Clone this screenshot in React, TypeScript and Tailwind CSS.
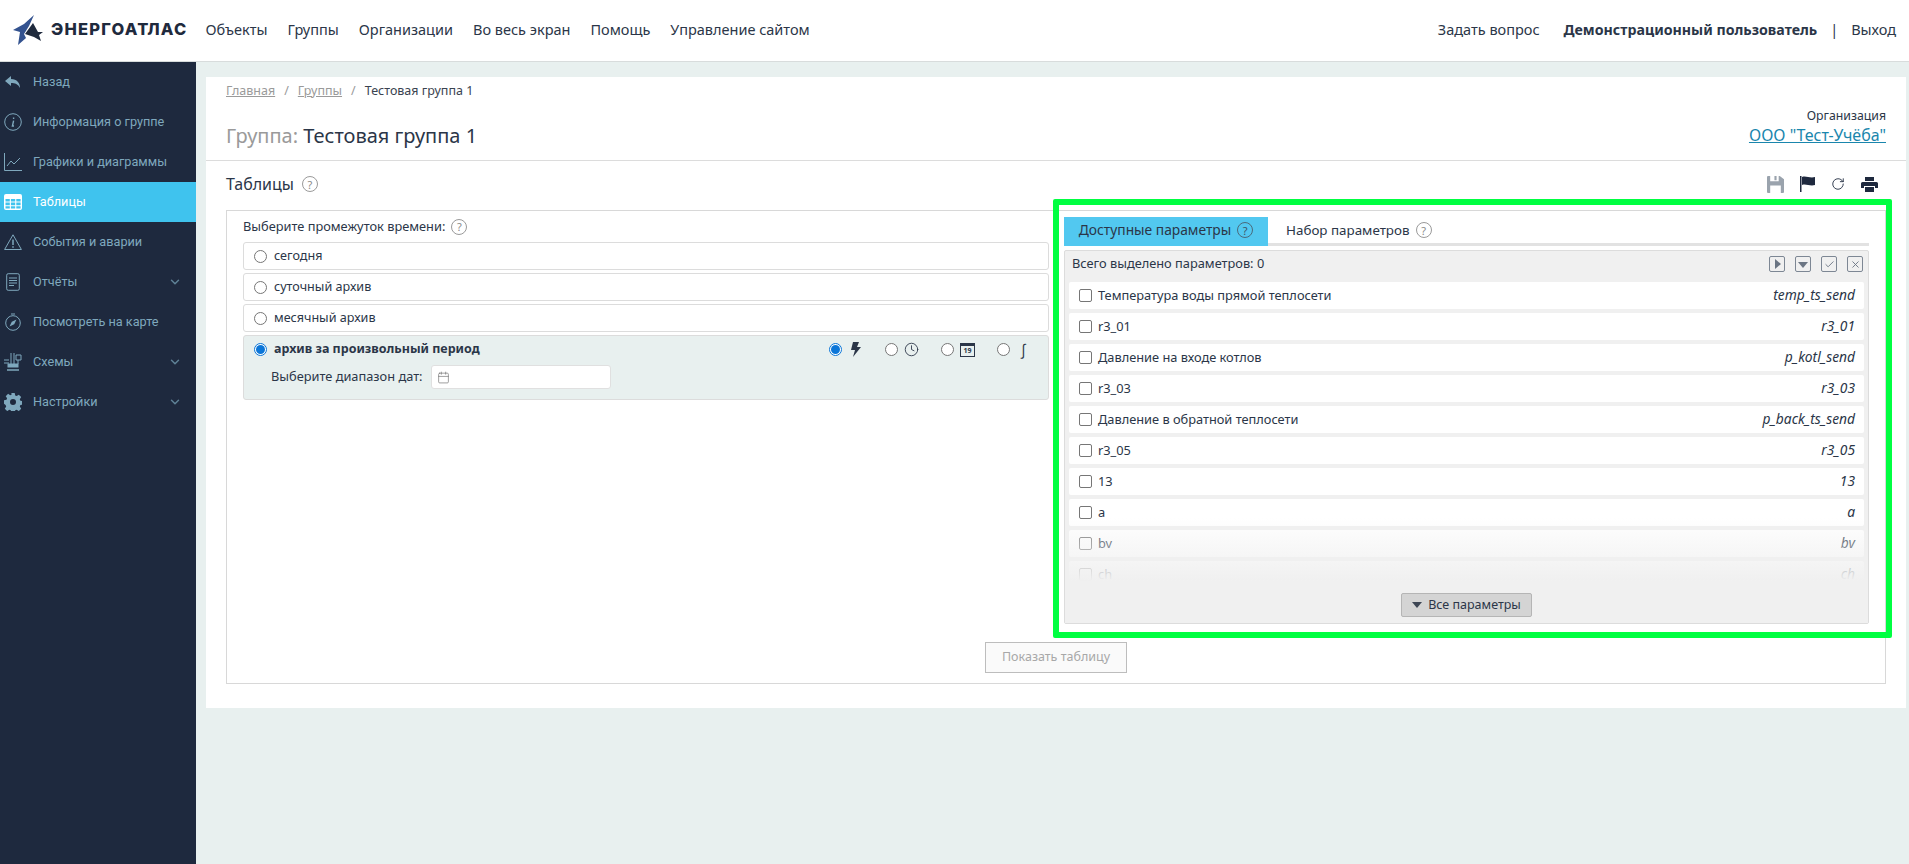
import { ChevronDown, Check, X, Calendar, Clock, RotateCw } from "lucide-react"

const font = "font-['Noto_Sans','Open_Sans',sans-serif]"

const topLinks = ["Объекты", "Группы", "Организации", "Во весь экран", "Помощь", "Управление сайтом"]

const params = [
  { name: "Температура воды прямой теплосети", code: "temp_ts_send" },
  { name: "r3_01", code: "r3_01" },
  { name: "Давление на входе котлов", code: "p_kotl_send" },
  { name: "r3_03", code: "r3_03" },
  { name: "Давление в обратной теплосети", code: "p_back_ts_send" },
  { name: "r3_05", code: "r3_05" },
  { name: "13", code: "13" },
  { name: "a", code: "a" },
  { name: "bv", code: "bv" },
  { name: "ch", code: "ch" },
]

function Logo() {
  return (
    <svg width="34" height="32" viewBox="0 0 34 32" className="shrink-0">
      <path d="M23 1 L13 10 L2 16 L9 18 L7 31 L15 24 L13 20 L18 12 Z" fill="#33528f" />
      <path d="M22 9 L27 18 L32 18 L28 21 L30 27 L23 23 L14 20 Z" fill="#1f2a3d" />
    </svg>
  )
}

function Help({ dark }: { dark?: boolean }) {
  return (
    <span
      className={`inline-flex h-4 w-4 items-center justify-center rounded-full border text-[11px] leading-none ${
        dark ? "border-[#4a6a7c] text-[#3d5566]" : "border-[#9a9a9a] text-[#8a8a8a]"
      }`}
    >
      ?
    </span>
  )
}

function Radio({ on = false }: { on?: boolean }) {
  if (on) {
    return (
      <span className="flex h-[13px] w-[13px] shrink-0 items-center justify-center rounded-full border border-[#0b76d8] bg-white">
        <span className="h-[9px] w-[9px] rounded-full bg-[#0b76d8]" />
      </span>
    )
  }
  return <span className="h-[13px] w-[13px] shrink-0 rounded-full border border-[#767676] bg-white" />
}

function SideItem({ icon, label, active, sub }: { icon: React.ReactNode; label: string; active?: boolean; sub?: boolean }) {
  return (
    <div className={`flex h-10 items-center pl-1 pr-[14px] font-['Roboto',sans-serif] text-[12.7px] ${active ? "bg-[#3fc3ee] text-white" : "text-[#7fa8bd]"}`}>
      <span className="flex w-[18px] justify-center">{icon}</span>
      <span className="ml-[11px] flex-1 whitespace-nowrap">{label}</span>
      {sub && <ChevronDown size={14} strokeWidth={2.5} className="text-[#5f8296]" />}
    </div>
  )
}

function Sidebar() {
  const c = "#7fa8bd"
  return (
    <aside className="w-[196px] shrink-0 bg-[#1e293e]">
      <SideItem
        label="Назад"
        icon={
          <svg width="16" height="12" viewBox="0 0 16 12" fill={c}>
            <path d="M6 0 L0 5 L6 10 V7 C10 7 13 8 15 12 C15 7 12 3 6 3 Z" />
          </svg>
        }
      />
      <SideItem
        label="Информация о группе"
        icon={
          <svg width="18" height="18" viewBox="0 0 18 18" fill="none" stroke={c}>
            <circle cx="9" cy="9" r="8.3" />
            <path d="M9.6 4.5v1.4M9.6 7.6 L8.4 13 H10" strokeWidth="1.4" />
          </svg>
        }
      />
      <SideItem
        label="Графики и диаграммы"
        icon={
          <svg width="18" height="18" viewBox="0 0 18 18" fill="none" stroke={c}>
            <path d="M.5 0v17.5H18M3 13l4-5 3 3 6-6" />
          </svg>
        }
      />
      <SideItem
        active
        label="Таблицы"
        icon={
          <svg width="18" height="16" viewBox="0 0 18 16" fill="#fff">
            <path d="M2 0h14a2 2 0 0 1 2 2v12a2 2 0 0 1-2 2H2a2 2 0 0 1-2-2V2a2 2 0 0 1 2-2Z" />
            <path
              fill="#3fc3ee"
              d="M1.5 5h4.3v2.6H1.5zM6.9 5h4.300v2.600H6.900zM12.300 5h4.300v2.600h-4.300zM1.500 8.600h4.300v2.600H1.500zM6.900 8.600h4.300v2.600H6.900zM12.300 8.600h4.300v2.600h-4.300zM1.500 12.200h4.300v2.300H1.500zM6.900 12.200h4.300v2.300H6.900zM12.300 12.200h4.300v2.300h-4.300z"
            />
          </svg>
        }
      />
      <SideItem
        label="События и аварии"
        icon={
          <svg width="18" height="16" viewBox="0 0 18 16" fill="none" stroke={c}>
            <path d="M9 .8 L17.4 15.500 H.6 Z" strokeLinejoin="round" />
            <path d="M9 5.500v5.500M9 12.200v1.500" strokeWidth="1.500" />
          </svg>
        }
      />
      <SideItem
        sub
        label="Отчёты"
        icon={
          <svg width="14" height="18" viewBox="0 0 14 18" fill="none" stroke={c}>
            <rect x=".7" y=".7" width="12.600" height="16.600" rx="1.500" />
            <path d="M3 5h8M3 7.500h8M3 10h8M3 12.500h5" />
          </svg>
        }
      />
      <SideItem
        label="Посмотреть на карте"
        icon={
          <svg width="18" height="18" viewBox="0 0 18 18" fill="none" stroke={c}>
            <circle cx="9" cy="10" r="7.300" />
            <path d="M7 1h4" />
            <path d="M12.500 6.500 L10.200 11.200 L5.500 13.500 L7.800 8.800 Z" fill={c} stroke="none" />
          </svg>
        }
      />
      <SideItem
        sub
        label="Схемы"
        icon={
          <svg width="18" height="18" viewBox="0 0 18 18" fill="none" stroke={c}>
            <path d="M0 7h5M0 10h5M7 0v11M10 0v11M12 2h5v5h-5zM14 7v4" />
            <rect x="4" y="11" width="10" height="3" fill={c} />
            <path d="M3 17h12" strokeWidth="1.500" />
          </svg>
        }
      />
      <SideItem
        sub
        label="Настройки"
        icon={
          <svg width="18" height="18" viewBox="0 0 18 18" fill={c}>
            <path
              fillRule="evenodd"
              d="M7.300 0h3.400l.5 2.500 1.500.6 2.100-1.400 2.400 2.400-1.400 2.100.6 1.500 2.500.5v3.400l-2.500.5-.6 1.500 1.400 2.100-2.400 2.400-2.100-1.400-1.500.6-.5 2.500H7.300l-.5-2.500-1.500-.6-2.100 1.400-2.400-2.400 1.400-2.100-.6-1.500L0 10.700V7.300l2.500-.5.600-1.500-1.400-2.100 2.400-2.400 2.100 1.400 1.500-.6zM9 6a3 3 0 1 0 0 6 3 3 0 0 0 0-6Z"
            />
          </svg>
        }
      />
    </aside>
  )
}

function TimeRow({ label }: { label: string }) {
  return (
    <div className="flex h-[28px] items-center gap-[7px] rounded-[3px] border border-[#dcdcdc] pl-[10px] text-[12.6px] text-[#2b3648]">
      <Radio />
      {label}
    </div>
  )
}

function ToolBtn({ children }: { children: React.ReactNode }) {
  return (
    <span className="flex h-4 w-4 items-center justify-center rounded-[2px] border border-[#7d8794] text-[#6b7583]">{children}</span>
  )
}

function ParamRow({ name, code }: { name: string; code: string }) {
  return (
    <div className="flex h-[27px] shrink-0 items-center rounded-[2px] bg-white pl-[10px] pr-[9px] text-[12.8px] text-[#2b3648]">
      <span className="h-[13px] w-[13px] rounded-[2px] border border-[#767676]" />
      <span className="ml-[6px] flex-1">{name}</span>
      <span className="text-[13.8px] italic">{code}</span>
    </div>
  )
}

export default function App() {
  return (
    <div className={`flex h-[864px] flex-col overflow-hidden bg-[#e8f0ef] ${font}`}>
      <header className="flex h-[62px] shrink-0 items-center border-b border-[#d8dcdc] bg-white pb-[2px] pl-[11px] pr-[13px] text-[14.5px] text-[#2b3648]">
        <Logo />
        <span className="ml-[6px] font-['Inter',sans-serif] text-[16.5px] font-extrabold tracking-[1.2px] text-[#1f2a3d]">ЭНЕРГОАТЛАС</span>
        <nav className="ml-[18px] flex gap-5">
          {topLinks.map((t) => (
            <span key={t}>{t}</span>
          ))}
        </nav>
        <div className="ml-auto flex items-center">
          <span>Задать вопрос</span>
          <span className="ml-6 text-[14.2px] font-bold">Демонстрационный пользователь</span>
          <span className="mx-[13px]">|</span>
          <span>Выход</span>
        </div>
      </header>
      <div className="flex min-h-0 flex-1">
        <Sidebar />
        <main className="min-w-0 flex-1 pl-[10px] pr-[3px] pt-[15px]">
          <div className="bg-white pb-6">
            <div className="h-[84px] border-b border-[#dcdcdc] px-5">
              <div className="flex items-start justify-between">
                <div>
                  <div className="flex gap-[9px] pt-[5px] text-[12.5px] text-[#9a9a9a]">
                    <span className="underline">Главная</span>
                    <span>/</span>
                    <span className="underline">Группы</span>
                    <span>/</span>
                    <span className="text-[#3a4350]">Тестовая группа 1</span>
                  </div>
                  <div className="mt-[20px] text-[20px] text-[#2b3648]">
                    <span className="text-[#9a9a9a]">Группа:</span> Тестовая группа 1
                  </div>
                </div>
                <div className="pt-[31px] text-right">
                  <div className="text-[12.3px] leading-4 text-[#2b3648]">Организация</div>
                  <div className="mt-[1px] text-[16px] leading-5 text-[#1a86ad] underline">ООО "Тест-Учёба"</div>
                </div>
              </div>
            </div>
            <div className="flex h-[49px] items-center justify-between px-5 pb-[3px]">
              <div className="flex items-center gap-2 text-[16px] text-[#2b3648]">
                Таблицы <Help />
              </div>
              <div className="flex items-center gap-[16px] pr-2 text-[#1e293e]">
                <svg width="17" height="17" viewBox="0 0 16 16" fill="#9aa3ad">
                  <path
                    fillRule="evenodd"
                    d="M1 0h11l4 3v12a1 1 0 0 1-1 1H1a1 1 0 0 1-1-1V1a1 1 0 0 1 1-1Zm2 0v5h8V0H9v4H7V0ZM3 9v7h10V9Z"
                  />
                </svg>
                <svg width="15" height="16" viewBox="0 0 15 16" fill="currentColor">
                  <path d="M0 0h1.500v16H0zM2 1c4-1.500 8 1.500 13 0v8c-5 1.500-9-1.500-13 0Z" />
                </svg>
                <RotateCw size={14} strokeWidth={1.5} />
                <svg width="17" height="15" viewBox="0 0 17 15" fill="currentColor">
                  <path
                    fillRule="evenodd"
                    d="M4 0h9v4H4ZM1.500 5h14A1.500 1.500 0 0 1 17 6.500V11h-3V9H3v2H0V6.500A1.500 1.500 0 0 1 1.500 5ZM4 10h9v5H4Z"
                  />
                </svg>
              </div>
            </div>
            <div className="mx-5 flex h-[474px] flex-col border border-[#d8d8d8]">
              <div className="flex h-[431px] shrink-0">
                <div className="w-[826px] shrink-0 pl-4 pr-1">
                  <div className="flex h-[31px] items-center gap-[6px] text-[12.8px] text-[#2b3648]">
                    Выберите промежуток времени: <Help />
                  </div>
                  <div className="flex flex-col gap-[3px]">
                    <TimeRow label="сегодня" />
                    <TimeRow label="суточный архив" />
                    <TimeRow label="месячный архив" />
                    <div className="h-[65px] rounded-[3px] border border-[#dcdcdc] bg-[#e8f0ef] pl-[10px] text-[12.5px] text-[#2b3648]">
                      <div className="flex h-[27px] items-center gap-[7px]">
                        <Radio on />
                        <span className="font-bold">архив за произвольный период</span>
                        <div className="ml-auto flex items-center gap-[22px] pr-[17px]">
                          <span className="flex items-center gap-[6px]">
                            <Radio on />
                            <svg width="15" height="15" viewBox="0 0 15 15" fill="currentColor">
                              <path d="M5 0h6L9 5h4L5 15l2-7H3Z" />
                            </svg>
                          </span>
                          <span className="flex items-center gap-[6px]">
                            <Radio />
                            <Clock size={15} strokeWidth={1.4} />
                          </span>
                          <span className="flex items-center gap-[6px]">
                            <Radio />
                            <span className="flex h-[14px] w-[15px] items-center justify-center border border-t-[3px] border-[#2b3648] pb-[1px] text-[7px] font-bold leading-none">
                              19
                            </span>
                          </span>
                          <span className="flex items-center gap-[6px]">
                            <Radio />
                            <span className="w-[15px] text-center text-[15px] leading-none">∫</span>
                          </span>
                        </div>
                      </div>
                      <div className="flex items-center gap-2 pl-[17px] pt-[2px] text-[12.8px]">
                        Выберите диапазон дат:
                        <span className="flex h-6 w-[180px] items-center rounded-[3px] border border-[#e0e0e0] bg-white pl-[5px] text-[#777]">
                          <Calendar size={13} strokeWidth={1.3} />
                        </span>
                      </div>
                    </div>
                  </div>
                </div>
                <div className="relative min-w-0 flex-1 pl-[11px] pr-4">
                  <div className="pointer-events-none absolute -right-[7px] -top-[12px] bottom-[4px] left-0 rounded-[2px] border-[6px] border-[#00ff41]" />
                  <div className="mt-[6px] flex h-[29px] border-b-[3px] border-[#e2e2e2] text-[13.8px] text-[#2b3648]">
                    <div className="flex h-[29px] w-[204px] items-center justify-center gap-[6px] border-b-[3px] border-[#52c8f0] bg-[#52c8f0]">
                      Доступные параметры <Help dark />
                    </div>
                    <div className="flex items-center gap-[6px] pl-[18px] text-[13.4px]">
                      Набор параметров <Help />
                    </div>
                  </div>
                  <div className="relative mt-[4px] h-[374px] rounded-[2px] border border-[#dcdcdc] bg-[#f0f0f0] px-[4px]">
                    <div className="flex h-[31px] items-center justify-between pb-[5px] pl-[3px] pr-[1px] text-[12.8px] text-[#2b3648]">
                      Всего выделено параметров: 0
                      <div className="flex gap-[10px]">
                        <ToolBtn>
                          <span className="ml-[1px] h-0 w-0 border-y-[5px] border-l-[6px] border-y-transparent border-l-[#6b7583]" />
                        </ToolBtn>
                        <ToolBtn>
                          <span className="mt-[1px] h-0 w-0 border-x-[5px] border-t-[6px] border-x-transparent border-t-[#6b7583]" />
                        </ToolBtn>
                        <ToolBtn>
                          <Check size={11} />
                        </ToolBtn>
                        <ToolBtn>
                          <X size={11} />
                        </ToolBtn>
                      </div>
                    </div>
                    <div className="flex h-[304px] flex-col gap-1 overflow-hidden">
                      {params.map((p) => (
                        <ParamRow key={p.code} name={p.name} code={p.code} />
                      ))}
                    </div>
                    <div className="absolute inset-x-0 bottom-0 flex h-[105px] items-end justify-center bg-gradient-to-b from-[#f0f0f0]/0 via-[#f0f0f0] via-60% to-[#f0f0f0] pb-[6px]">
                      <span className="flex h-6 w-[131px] items-center justify-center gap-[6px] rounded-[2px] border border-[#b5b5b5] bg-[#d4d4d4] text-[12.5px] text-[#2b3648]">
                        <span className="h-0 w-0 border-x-[5px] border-t-[6px] border-x-transparent border-t-[#3d4654]" />
                        Все параметры
                      </span>
                    </div>
                  </div>
                </div>
              </div>
              <div className="flex justify-center">
                <span className="flex h-[31px] w-[142px] items-center justify-center border border-[#bdbdbd] bg-[#fafafa] text-[12.5px] text-[#a8a8a8]">
                  Показать таблицу
                </span>
              </div>
            </div>
          </div>
        </main>
      </div>
    </div>
  )
}
